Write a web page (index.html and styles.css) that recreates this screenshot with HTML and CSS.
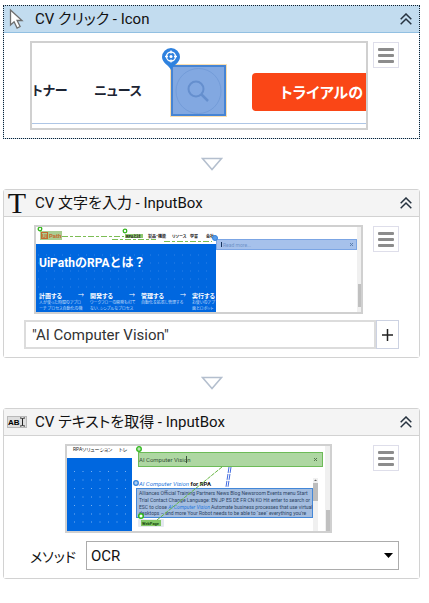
FILE: index.html
```html
<!DOCTYPE html>
<html lang="ja">
<head>
<meta charset="UTF-8">
<meta name="viewport" content="width=device-width, initial-scale=1">
<title>CV Activities</title>
<link rel="stylesheet" href="styles.css">
</head>
<body>
<main class="workflow">

  <section class="activity selected">
    <header class="activityHeader">
      <svg class="activityIcon" width="20" height="22" viewBox="0 0 20 22">
        <path d="M3.500 2v15l3.600-3.200 3 6.200 3-1.500-3-6h4.900z" fill="#fff" stroke="#6e6e6e" stroke-width="1.300"/>
      </svg>
      <h2 class="activityTitle">CV クリック - Icon</h2>
      <button class="collapseButton" type="button" aria-label="折りたたむ">
        <svg width="12" height="12" viewBox="0 0 12 12"><path d="M.7 6.200 6 1l5.300 5.200M.7 11.200 6 6l5.300 5.200"/></svg>
      </button>
    </header>
    <div class="activityBody">
      <div class="previewRow">
        <div class="preview">
          <svg width="334" height="85" viewBox="0 0 334 85">
            <g class="siteNav">
              <text x="0" y="52">トナー</text>
              <text x="62" y="52">ニュース</text>
            </g>
            <rect x="138" y="21" width="57" height="53" fill="#fbdfae"/>
            <rect x="140" y="23" width="53" height="49" fill="#82a8e1" stroke="#4684d4" stroke-width="2"/>
            <circle cx="166.500" cy="48" r="22.500" fill="none" stroke="#739cd9"/>
            <circle cx="164" cy="46" r="7.500" fill="none" stroke="#658fce" stroke-width="2"/>
            <path d="M169.500 51.500 176 58" stroke="#658fce" stroke-width="2.500"/>
            <path d="M139 27c-2-5-9-7-9-13a9 9 0 0 1 18 0c0 6-7 8-9 13z" fill="#2f82df"/>
            <circle cx="139" cy="13.500" r="4.500" fill="none" stroke="#fff" stroke-width="1.300"/>
            <path d="M139 7.500v3M139 16.500v3M133 13.500h3M142 13.500h3" stroke="#fff" stroke-width="1.300"/>
            <circle cx="139" cy="13.500" r="1.500" fill="#fff"/>
            <rect x="220" y="30" width="125" height="38" rx="4" fill="#fa4616"/>
            <text class="siteCta" x="248" y="55">トライアルの</text>
            <path d="M0 80.500h334" stroke="#aec6e6"/>
          </svg>
        </div>
        <button class="menuButton" type="button" aria-label="メニュー"><span></span><span></span><span></span></button>
      </div>
    </div>
  </section>

  <svg class="connector" width="22" height="14" viewBox="0 0 22 14"><path d="M1.500 1.500h19L11 12.500z"/></svg>

  <section class="activity">
    <header class="activityHeader">
      <span class="activityIcon typeIcon">T</span>
      <h2 class="activityTitle">CV 文字を入力 - InputBox</h2>
      <button class="collapseButton" type="button" aria-label="折りたたむ">
        <svg width="12" height="12" viewBox="0 0 12 12"><path d="M.7 6.200 6 1l5.300 5.200M.7 11.200 6 6l5.300 5.200"/></svg>
      </button>
    </header>
    <div class="activityBody">
      <div class="previewRow">
        <div class="preview">
          <svg width="325" height="85" viewBox="0 0 325 85">
            <rect x="4" y="4" width="22" height="9" fill="#a9cd91"/>
            <rect x="5.500" y="5.500" width="6" height="6" fill="none" stroke="#c56a2d"/>
            <text x="6" y="11" class="siteLogo">Ui Path</text>
            <path d="M26 9.500h62M76 12.500h44M128 14.500h48" stroke="#7cbd54" stroke-dasharray="6 2 3 2"/>
            <rect x="89" y="7" width="18" height="4" fill="#8fc66e"/>
            <g class="siteMenu">
              <text x="90" y="11">RPAとは</text><text x="112" y="11">製品・機能</text><text x="136" y="11">リソース</text><text x="154" y="11">学習</text><text x="170" y="11">会社</text>
            </g>
            <circle cx="4" cy="2" r="1.800" fill="#fff" stroke="#34b61c" stroke-width="1.300"/>
            <circle cx="89" cy="4" r="1.800" fill="#fff" stroke="#34b61c" stroke-width="1.300"/>
            <rect y="17" width="180" height="68" fill="#0067df"/>
            <path d="M2 28h176M2 36h176M2 44h176M2 52h176M2 60h176" stroke="#2c82e8" stroke-dasharray="1 7"/>
            <text x="3" y="40" class="siteHeading">UiPathのRPAとは？</text>
            <g class="siteStep">
              <text x="3" y="71">計画する</text><text x="54" y="71">開発する</text><text x="105" y="71">管理する</text><text x="156" y="71">実行する</text>
            </g>
            <g class="siteArrow">
              <text x="42" y="70">→</text><text x="93" y="70">→</text><text x="144" y="70">→</text>
            </g>
            <g class="siteSmall">
              <text x="3" y="77">人が使った時間のアプロ</text><text x="3" y="83">ーチ プロセス自動化の機</text>
              <text x="54" y="77">ワークフローの開発も打て</text><text x="54" y="83">ない、シンプルなプロセス</text>
              <text x="105" y="77">自動化を拡張し管理する</text>
              <text x="156" y="77">お使いのアプ</text><text x="156" y="83">面とロボット</text>
            </g>
            <rect x="180.500" y="12.500" width="140" height="10" fill="#a6c1eb" stroke="#7ba5e4"/>
            <path d="M185.500 15v5" stroke="#16345f"/>
            <text x="187" y="20" class="siteSearch">Read more...</text>
            <path d="m314 16 3 3m0-3-3 3" stroke="#5c7fae"/>
            <circle cx="179" cy="11" r="2.500" fill="#5b9de9" stroke="#2f82df"/>
            <path d="M323 0v85" stroke="#f0f0f0" stroke-width="4"/>
            <rect x="322" y="57" width="3" height="23" fill="#c0c0c0"/>
          </svg>
        </div>
        <button class="menuButton" type="button" aria-label="メニュー"><span></span><span></span><span></span></button>
      </div>
      <div class="inputRow">
        <input class="textInput" type="text" value="&quot;AI Computer Vision&quot;" aria-label="テキスト">
        <button class="plusButton" type="button" aria-label="追加">
          <svg width="11" height="12" viewBox="0 0 11 12"><path d="M0 6h11M5.500 0v12"/></svg>
        </button>
      </div>
    </div>
  </section>

  <svg class="connector" width="22" height="14" viewBox="0 0 22 14"><path d="M1.500 1.500h19L11 12.500z"/></svg>

  <section class="activity">
    <header class="activityHeader">
      <svg class="activityIcon" width="20" height="12" viewBox="0 0 20 12">
        <rect x=".5" y=".5" width="19" height="11" fill="#dedede" stroke="#b9b9b9"/>
        <text x="1" y="9" class="abiText">AB</text>
        <path d="M13 2h1.500l1 1 1-1H18M15.500 2.500v7M13 10h1.500l1-1 1 1H18" fill="none" stroke="#222"/>
      </svg>
      <h2 class="activityTitle">CV テキストを取得 - InputBox</h2>
      <button class="collapseButton" type="button" aria-label="折りたたむ">
        <svg width="12" height="12" viewBox="0 0 12 12"><path d="M.7 6.200 6 1l5.300 5.200M.7 11.200 6 6l5.300 5.200"/></svg>
      </button>
    </header>
    <div class="activityBody">
      <div class="previewRow">
        <div class="preview">
          <svg width="263" height="85" viewBox="0 0 263 85">
            <g class="siteTop">
              <text x="6" y="5">RPAソリューション</text><text x="52" y="5">トレ</text>
            </g>
            <rect y="12" width="65" height="73" fill="#0067df"/>
            <path d="M7 25.500h56M7 34h56M7 42.500h56M7 51h56M7 59.500h56M7 68h56M7 76h56" stroke="#76b0f2" stroke-dasharray="1 7.500"/>
            <rect x="71.500" y="6.500" width="184" height="14" fill="#aed7a2" stroke="#6dbb58"/>
            <text x="72" y="16" class="foundText">AI Computer Vision</text>
            <path d="M119.500 10v7" stroke="#38523a"/>
            <path d="m247 12 3 3m0-3-3 3" stroke="#53764c"/>
            <path d="m162 21-3 20M164 21l-3 20" stroke="#426be0" stroke-dasharray="6 1"/>
            <text x="72" y="40" class="resultTitle"><tspan class="resultLink">AI Computer Vision</tspan> for RPA</text>
            <rect x="69.500" y="42.500" width="176" height="29" fill="#a4bddf" stroke="#4387d8"/>
            <g class="resultText">
              <text x="72" y="49">Alliances Official Training Partners News Blog Newsroom Events menu Start</text>
              <text x="72" y="56">Trial Contact Change Language: EN JP ES DE FR CN KO Hit enter to search or</text>
              <text x="72" y="63">ESC to close <tspan class="resultLink">AI Computer Vision</tspan> Automate business processes that use virtual</text>
              <text x="72" y="69">desktops – and more Your Robot needs to be able to `see` everything you're</text>
            </g>
            <rect x="71" y="73" width="26" height="8" rx="1" fill="#e5e9f0"/>
            <rect x="74" y="74" width="20" height="6" fill="#81c665"/>
            <text x="75" y="79" class="resultTag">WebPage</text>
            <path d="m90 74 65-53" stroke="#65b641" stroke-dasharray="4 1"/>
            <circle cx="72" cy="3" r="2.300" fill="#b8e6b0" stroke="#2fb71b" stroke-width="1.300"/>
            <circle cx="69" cy="37" r="2.300" fill="#aacdf3" stroke="#2f82df" stroke-width="1.300"/>
            <circle cx="74" cy="70" r="2.300" fill="#fff" stroke="#2fb71b" stroke-width="1.500"/>
            <rect x="246" y="32" width="5" height="53" fill="#f0f0f0"/>
            <rect x="246" y="37" width="5" height="18" fill="#bdbdbd"/>
            <path d="m247 35 1.500-1.500L250 35z" fill="#666"/>
            <rect x="258" width="5" height="85" fill="#f0f0f0"/>
            <rect x="259" y="64" width="4" height="21" fill="#c0c0c0"/>
          </svg>
        </div>
        <button class="menuButton" type="button" aria-label="メニュー"><span></span><span></span><span></span></button>
      </div>
      <div class="methodRow">
        <label class="methodLabel" for="method">メソッド</label>
        <div class="selectWrapper">
          <select class="methodSelect" id="method">
            <option>OCR</option>
          </select>
          <svg class="selectArrow" width="9" height="5" viewBox="0 0 9 5"><path d="M0 0h9L4.500 5z"/></svg>
        </div>
      </div>
    </div>
  </section>

</main>
</body>
</html>
```

FILE: styles.css
```css
*{
  box-sizing: border-box;
}
body{
  margin: 0;
  background-color: #fff;
  color: #111;
  font-family: Roboto, "Noto Sans CJK JP", sans-serif;
  font-size: 15px;
  font-feature-settings: "palt";
}
button, input, select{
  margin: 0;
  padding: 0;
  color: inherit;
  font: inherit;
}
svg{
  display: block;
}
.workflow{
  display: flex;
  flex-direction: column;
  padding: 5px 9px 5px 3px;
}
.activity{
  border: 1px solid #d2d2d2;
  border-radius: 3px;
}
.activityHeader{
  display: flex;
  align-items: center;
  height: 27px;
  padding: 0 7px 0 3px;
  border-bottom: 1px solid #d2d2d2;
  background-color: #f4f4f4;
}
.selected{
  border: 1px dotted #10202e;
  border-radius: 0;
  background-color: #c2dcef;
}
.selected .activityHeader{
  border-bottom-color: #92c0e2;
  background-color: #c2dcef;
}
.activityIcon{
  flex: none;
  width: 20px;
}
.typeIcon{
  font-family: "Liberation Serif", serif;
  font-size: 30px;
  line-height: 26px;
  text-align: center;
}
.abiText{
  font: bold 8px "Liberation Sans", sans-serif;
}
.activityTitle{
  flex: 1;
  margin: 0 0 0 8px;
  font-size: 15px;
  font-weight: normal;
  line-height: 24px;
  white-space: nowrap;
}
.collapseButton{
  padding: 0;
  border: 0;
  background: none;
  cursor: pointer;
}
.collapseButton path{
  fill: none;
  stroke: #26323f;
  stroke-width: 1.5;
}
.activityBody{
  padding: 8px 20px;
  background-color: #fff;
}
.previewRow{
  display: flex;
  align-items: flex-start;
}
.preview{
  flex: none;
  margin: 0 auto;
  border: 2px solid #d0d0d0;
}
.menuButton{
  display: flex;
  flex: none;
  flex-direction: column;
  align-items: center;
  justify-content: center;
  gap: 3px;
  width: 26px;
  height: 26px;
  margin-top: 1px;
  border: 1px solid #dedeea;
  background-color: #fff;
  cursor: pointer;
}
.menuButton span{
  width: 16px;
  height: 3px;
  border-radius: 1px;
  background-color: #8c8c8c;
}
.connector{
  align-self: center;
  margin: 18px 0;
}
.connector path{
  fill: #fff;
  stroke: #b4bfce;
  stroke-width: 1.5;
}
.inputRow{
  display: flex;
  margin-top: 6px;
}
.textInput{
  flex: 1;
  min-width: 0;
  height: 29px;
  padding: 0 6px;
  border: 2px solid #dcdcdc;
  background-color: #fff;
  color: #333;
}
.plusButton{
  display: flex;
  align-items: center;
  justify-content: center;
  width: 23px;
  border: 1px solid #ccd2e2;
  background-color: #fff;
}
.plusButton path{
  stroke: #222;
  stroke-width: 1.5;
}
.methodRow{
  display: flex;
  align-items: center;
  margin-top: 8px;
}
.methodLabel{
  width: 62px;
  padding-left: 6px;
  font-size: 14px;
  white-space: nowrap;
}
.selectWrapper{
  position: relative;
  flex: 1;
}
.methodSelect{
  width: 100%;
  height: 29px;
  padding: 0 4px;
  border: 1px solid #acacac;
  border-radius: 0;
  background-color: #fff;
  appearance: none;
}
.selectArrow{
  position: absolute;
  top: 12px;
  right: 6px;
  pointer-events: none;
}

/* page previews */
.siteNav{
  fill: #1c2433;
  font-size: 13px;
  font-weight: bold;
}
.siteCta{
  fill: #fff;
  font-size: 15px;
  font-weight: bold;
}
.siteLogo{
  fill: #c56a2d;
  font-size: 6px;
  font-weight: bold;
}
.siteMenu{
  fill: #222;
  font-size: 4px;
  font-weight: bold;
}
.siteHeading{
  fill: #fff;
  font-size: 12px;
  font-weight: bold;
  font-feature-settings: normal;
}
.siteStep{
  fill: #fff;
  font-size: 6px;
  font-weight: bold;
}
.siteArrow{
  fill: #fff;
  font-size: 6px;
}
.siteSmall{
  fill: #c2dcfa;
  font-size: 4px;
}
.siteSearch{
  fill: #6f93c8;
  font-size: 5px;
}
.siteTop{
  fill: #222;
  font-size: 5px;
}
.foundText{
  fill: #38523a;
  font-size: 6px;
}
.resultTitle{
  fill: #111;
  font-size: 6px;
  font-weight: bold;
}
.resultLink{
  fill: #2477dd;
  font-style: italic;
  font-weight: normal;
}
.resultText{
  fill: #2d4464;
  font-size: 5px;
}
.resultTag{
  fill: #1c4a12;
  font-size: 4px;
  font-weight: bold;
}
```
